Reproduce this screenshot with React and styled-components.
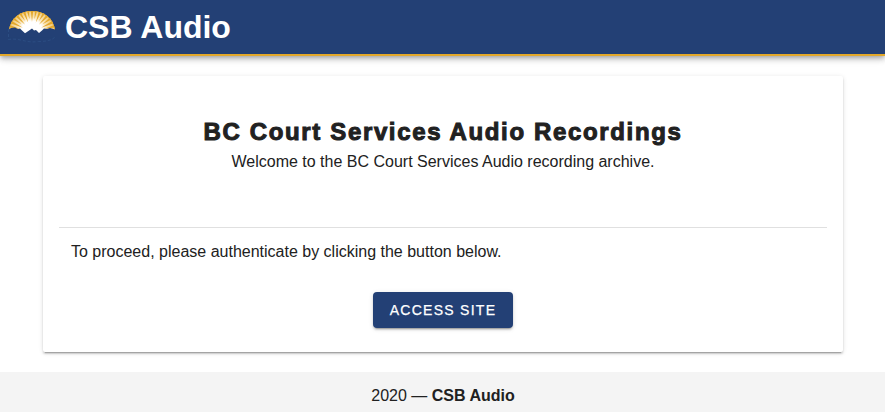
import React from 'react';
import styled, { createGlobalStyle } from 'styled-components';

const GlobalStyle = createGlobalStyle`
  * { box-sizing: border-box; }
  body {
    margin: 0;
    background: #fff;
    color: #212121;
    font: 16px/24px "Liberation Sans", Arial, sans-serif;
    overflow: hidden;
  }
  h1, h2, p { margin: 0; }
`;

const Page = styled.div`
  display: flex;
  flex-direction: column;
  height: 412px;
`;

const Header = styled.header`
  display: flex;
  align-items: center;
  flex: 0 0 56px;
  padding: 0 8px;
  gap: 9px;
  background: #234075;
  border-bottom: 2px solid #e3a82b;
  box-shadow: 0 2px 4px -1px rgba(0, 0, 0, 0.2), 0 4px 5px rgba(0, 0, 0, 0.14),
    0 1px 10px rgba(0, 0, 0, 0.12);
`;

const Logo = styled.svg`
  display: block;
  width: 48px;
  height: 34px;
`;

const SiteTitle = styled.h1`
  color: #fff;
  font-size: 32px;
  line-height: 40px;
  font-weight: 700;
`;

const Main = styled.main`
  flex: 1;
  padding: 20px 42px 20px 43px;
`;

const Card = styled.section`
  height: 276px;
  padding: 39px 16px 0;
  border-radius: 2px;
  background: #fff;
  box-shadow: 0 3px 1px -2px rgba(0, 0, 0, 0.2), 0 2px 2px rgba(0, 0, 0, 0.14),
    0 1px 5px rgba(0, 0, 0, 0.12);
`;

const Intro = styled.div`
  height: 113px;
  border-bottom: 1px solid #e0e0e0;
  text-align: center;
`;

const Heading = styled.h2`
  margin-bottom: 1px;
  font-size: 24px;
  line-height: 34px;
  font-weight: 700;
  letter-spacing: 1.64px;
  -webkit-text-stroke: 1px #212121;
`;

const Instruction = styled.p`
  padding: 12px 12px 0;
`;

const Actions = styled.div`
  display: flex;
  justify-content: center;
  padding-top: 28px;
`;

const Button = styled.button`
  width: 140px;
  height: 36px;
  padding: 0;
  border: 0;
  border-radius: 4px;
  background: #234075;
  color: #fff;
  font: 500 14px/36px "Liberation Sans", Arial, sans-serif;
  letter-spacing: 1.28px;
  -webkit-text-stroke: 0.25px #fff;
  text-transform: uppercase;
  box-shadow: 0 3px 1px -2px rgba(0, 0, 0, 0.2), 0 2px 2px rgba(0, 0, 0, 0.14),
    0 1px 5px rgba(0, 0, 0, 0.12);
`;

const Footer = styled.footer`
  flex: 0 0 40px;
  padding: 12px 0 0 1px;
  background: #f4f4f4;
  text-align: center;
`;

const RAYS = Array.from({ length: 17 }, (_, i) => {
  const angle = Math.PI * (0.02 + (i * 0.96) / 16);
  const inner = i % 2 ? 13 : 10;
  const point = (r, a) =>
    `${(24 - r * Math.cos(a)).toFixed(2)} ${(22 - r * Math.sin(a)).toFixed(2)}`;
  return `M${point(inner, angle)}L${point(27, angle - 0.065)}L${point(27, angle + 0.065)}Z`;
}).join('');

function SunLogo() {
  return (
    <Logo viewBox="0 0 48 34" aria-hidden="true">
      <defs>
        <clipPath id="sun">
          <path d="M1 19.5C3 8 12 1 24 1s21 7 23 18.5V25H1Z" />
        </clipPath>
        <radialGradient id="glow" gradientUnits="userSpaceOnUse" cx="24" cy="22" r="24">
          <stop offset="0.46" stopColor="#fff" />
          <stop offset="0.62" stopColor="#fae6ba" />
          <stop offset="1" stopColor="#efc36c" />
        </radialGradient>
      </defs>
      <g clipPath="url(#sun)">
        <path fill="url(#glow)" d="M0 0h48v26H0z" />
        <path fill="#e3a82b" d={RAYS} />
        <path
          fill="none"
          stroke="#e3a82b"
          strokeWidth="1.2"
          d="M1 19.5C3 8 12 1 24 1s21 7 23 18.5"
        />
      </g>
      <path
        fill="#234075"
        d="M0 20l3-2 4-.5 3 1.5 2-.5 2 2 3 2.8 3-2 4-2.8 2 2 2-.5 3 3 3-2.5 2-2 3 .5 3-1 5 1.5 1 1v7H0Z"
      />
      <path
        fill="none"
        stroke="#31568b"
        strokeWidth="0.6"
        strokeDasharray="3 2"
        d="M.5 19v10.5c11-2 17 4 30 2 7 0 13-1 16-4"
      />
    </Logo>
  );
}

export default function App() {
  return (
    <>
      <GlobalStyle />
      <Page>
        <Header>
          <SunLogo />
          <SiteTitle>CSB Audio</SiteTitle>
        </Header>
        <Main>
          <Card>
            <Intro>
              <Heading>BC Court Services Audio Recordings</Heading>
              <p>Welcome to the BC Court Services Audio recording archive.</p>
            </Intro>
            <Instruction>To proceed, please authenticate by clicking the button below.</Instruction>
            <Actions>
              <Button type="button">Access Site</Button>
            </Actions>
          </Card>
        </Main>
        <Footer>
          2020 — <strong>CSB Audio</strong>
        </Footer>
      </Page>
    </>
  );
}
